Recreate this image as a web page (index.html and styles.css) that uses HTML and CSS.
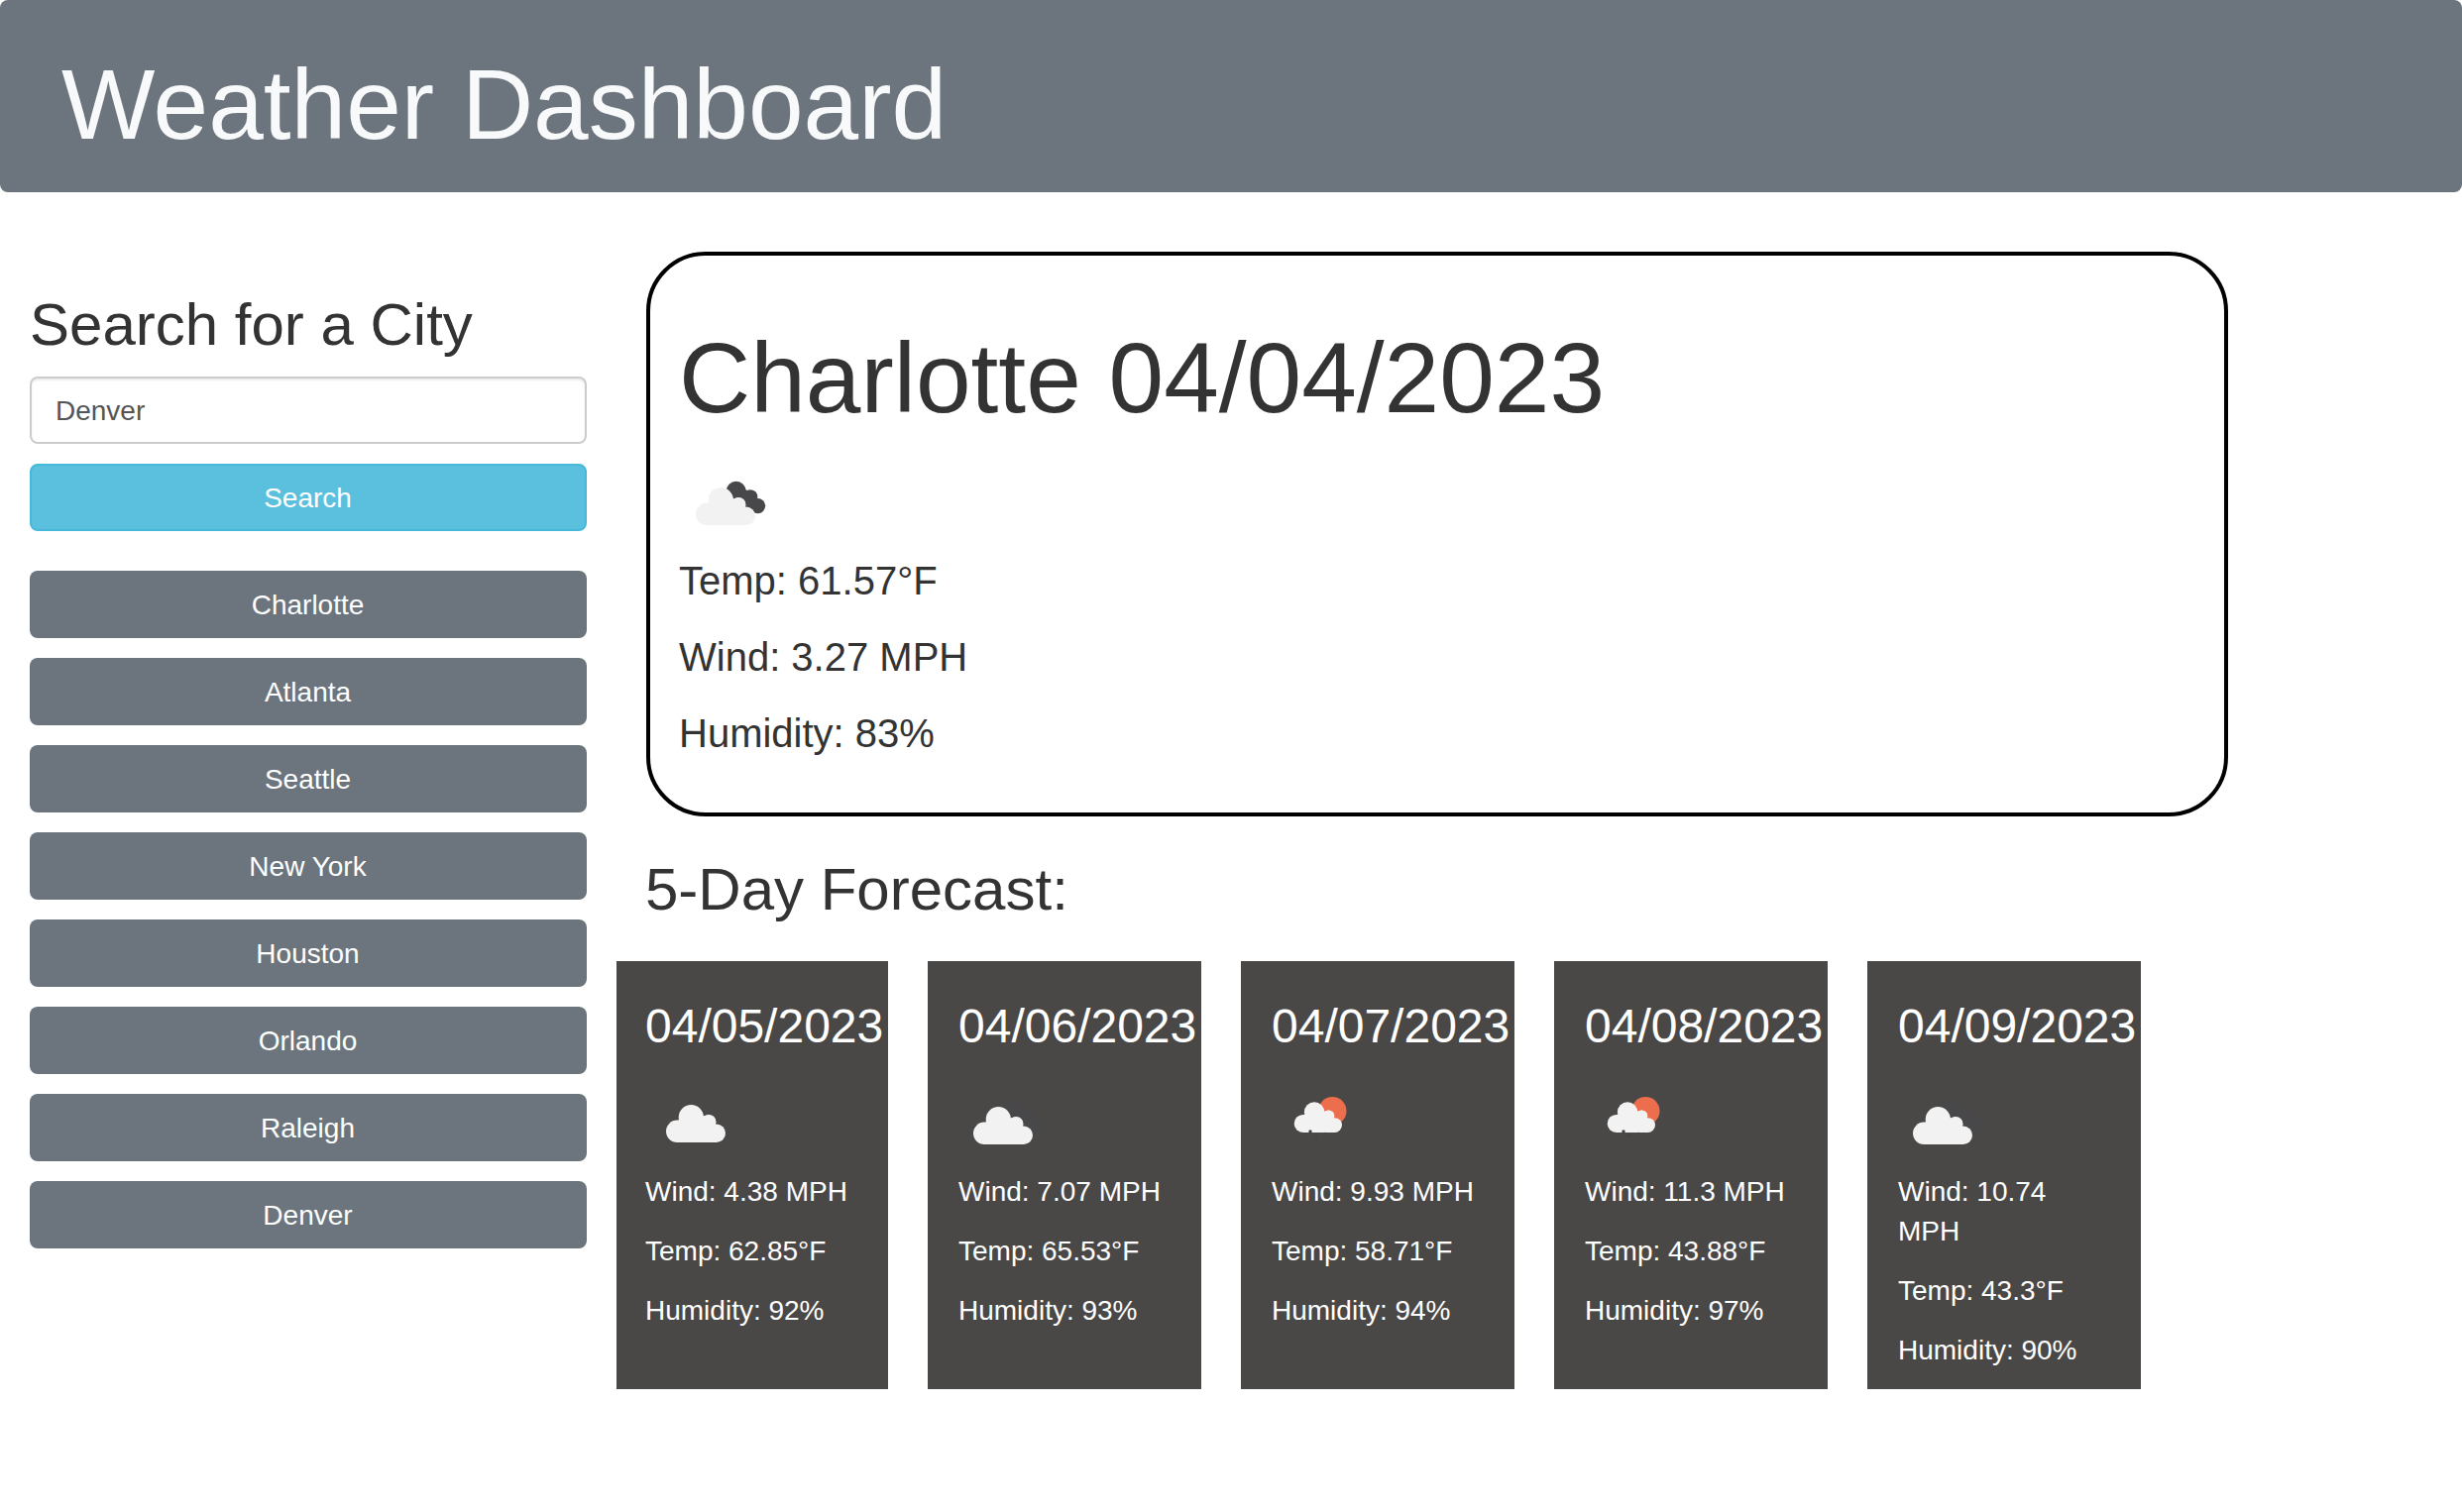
FILE: index.html
```html
<!DOCTYPE html>
<html lang="en">
<head>
<meta charset="utf-8">
<title>Weather Dashboard</title>
<link rel="stylesheet" href="styles.css">
</head>
<body>
<svg class="sprite" aria-hidden="true">
  <symbol id="cloud" viewBox="0 0 100 100">
    <circle cx="27.2" cy="60.8" r="11.2"/><circle cx="41.3" cy="46.6" r="12.6"/><circle cx="59.3" cy="51.2" r="7.2"/><circle cx="66.8" cy="62.8" r="9.2"/>
    <path d="M27 50L29 49.5L41 40L53 45.5L59.3 44L66 49V54L67 72H27Z"/>
  </symbol>
  <symbol id="broken" viewBox="0 0 100 100">
    <g fill="#48484a"><circle cx="56.7" cy="37.7" r="10"/><circle cx="71" cy="43.6" r="7.4"/><circle cx="78.6" cy="52.6" r="7.6"/>
    <path d="M48 40L57 30L65.3 36L71 38L77.3 44.8L82 50L78 60L66 55L54 46Z"/></g>
    <use href="#cloud" fill="#f2f2f2"/>
  </symbol>
  <symbol id="rain" viewBox="0 0 100 100">
    <circle cx="61.3" cy="38.2" r="14.2" fill="#ec6e4c"/>
    <use href="#cloud" fill="#f2f2f2" transform="translate(9.8 2) scale(.805)"/>
    <g fill="#444346"><circle cx="39" cy="58.9" r="1.7"/><circle cx="45.2" cy="63.4" r="1.6"/><circle cx="54.3" cy="60.7" r="1"/></g>
  </symbol>
</svg>
<header class="banner"><h1>Weather Dashboard</h1></header>
<div class="layout">
  <aside class="sidebar">
    <h2>Search for a City</h2>
    <input class="field" type="text" value="Denver" aria-label="City">
    <button class="btn btn-search">Search</button>
    <button class="btn">Charlotte</button>
    <button class="btn">Atlanta</button>
    <button class="btn">Seattle</button>
    <button class="btn">New York</button>
    <button class="btn">Houston</button>
    <button class="btn">Orlando</button>
    <button class="btn">Raleigh</button>
    <button class="btn">Denver</button>
  </aside>
  <main class="content">
    <section class="current">
      <h1>Charlotte 04/04/2023</h1>
      <svg class="icon"><use href="#broken" x="1"/></svg>
      <p>Temp: 61.57°F</p>
      <p>Wind: 3.27 MPH</p>
      <p>Humidity: 83%</p>
    </section>
    <h2 class="forecast-title">5-Day Forecast:</h2>
    <section class="forecast">
      <article class="day">
        <h3>04/05/2023</h3>
        <svg class="icon"><use href="#cloud" fill="#f2f2f2" x="5" y="-2"/></svg>
        <p>Wind: 4.38 MPH</p><p>Temp: 62.85°F</p><p>Humidity: 92%</p>
      </article>
      <article class="day">
        <h3>04/06/2023</h3>
        <svg class="icon"><use href="#broken" x="-1"/></svg>
        <p>Wind: 7.07 MPH</p><p>Temp: 65.53°F</p><p>Humidity: 93%</p>
      </article>
      <article class="day">
        <h3>04/07/2023</h3>
        <svg class="icon"><use href="#rain"/></svg>
        <p>Wind: 9.93 MPH</p><p>Temp: 58.71°F</p><p>Humidity: 94%</p>
      </article>
      <article class="day">
        <h3>04/08/2023</h3>
        <svg class="icon"><use href="#rain"/></svg>
        <p>Wind: 11.3 MPH</p><p>Temp: 43.88°F</p><p>Humidity: 97%</p>
      </article>
      <article class="day">
        <h3>04/09/2023</h3>
        <svg class="icon"><use href="#broken" x="-1"/></svg>
        <p>Wind: 10.74 MPH</p><p>Temp: 43.3°F</p><p>Humidity: 90%</p>
      </article>
    </section>
  </main>
</div>
</body>
</html>
```
FILE: styles.css
```css
* { box-sizing: border-box; }
body {
  margin: 0;
  background: #fff;
  color: #333;
  font: 28px/40px "Liberation Sans", Arial, sans-serif;
}
h1, h2, h3, p { margin: 0; font-weight: 400; }
h1 { font-size: 100px; line-height: 110px; }
h2 { font-size: 60px; line-height: 66px; }
h3 { font-size: 48px; line-height: 52.8px; }
.sprite { display: none; }
.icon { display: block; width: 100px; height: 100px; }

.banner {
  height: 194px;
  padding: 50px 62px 0;
  border-radius: 8px;
  background: #6c757d;
  color: #f8f9fa;
}

.layout { display: flex; padding-top: 60px; }
.sidebar {
  display: flex;
  flex-direction: column;
  gap: 20px;
  width: 622px;
  padding: 41px 30px 0;
}
.sidebar h2 { margin-bottom: -1px; }
.field, .btn {
  width: 100%;
  height: 68px;
  border-radius: 8px;
  font: inherit;
}
.field {
  padding: 1px 24px 0;
  border: 2px solid #ccc;
  background: #fff;
  color: #555;
  box-shadow: inset 0 2px 2px rgba(0, 0, 0, .075);
}
.btn {
  padding: 2px 1px 0 0;
  border: 0;
  background: #6c757d;
  color: #fff;
}
.btn-search {
  margin-bottom: 20px;
  border: 2px solid #46b8da;
  background: #5bc0de;
}

.content { width: 1656px; padding-left: 30px; }
.current {
  width: 1596px;
  height: 570px;
  padding: 68px 29px 0;
  border: 4px solid #000;
  border-radius: 60px;
}
.current .icon { margin-top: 22px; }
.current p {
  margin-bottom: 20px;
  font-size: 40px;
  line-height: 57.14px;
}
.forecast-title { margin: 41px 0 0 -1px; }
.forecast {
  display: flex;
  gap: 40px;
  margin: 39px 0 0 -30px;
}
.day {
  flex: none;
  width: 276px;
  height: 432px;
  padding: 39.8px 30px 0 31px;
  background: #4a4846;
  color: #fff;
}
.day:first-child { width: 274px; padding-left: 29px; }
.day .icon { margin-top: 20px; }
.day p { margin-bottom: 20px; }
```
